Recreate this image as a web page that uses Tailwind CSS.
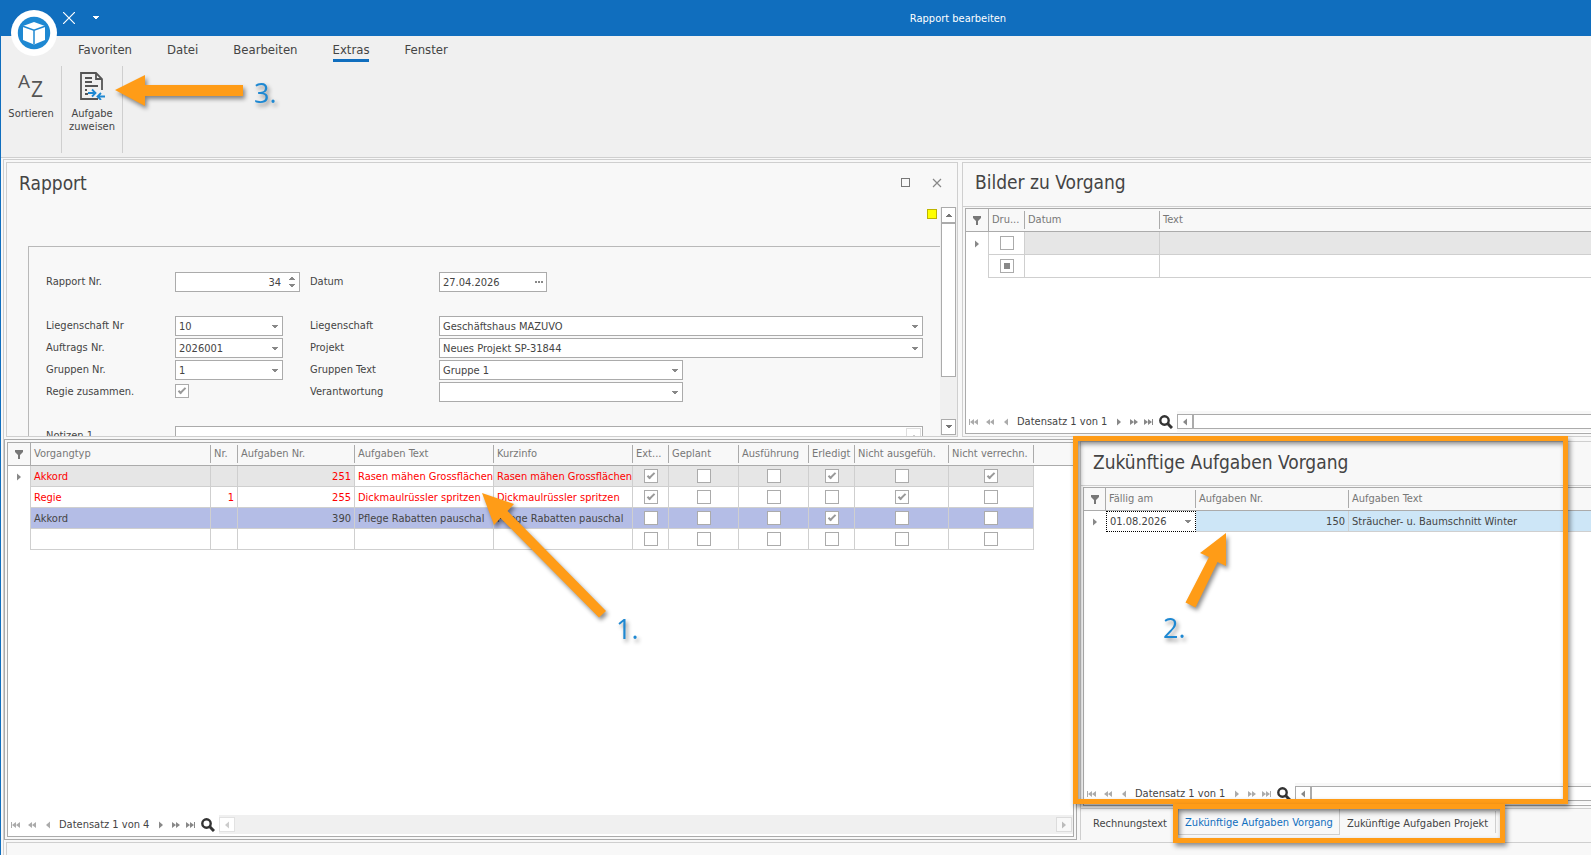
<!DOCTYPE html>
<html lang="de">
<head>
  <meta charset="UTF-8">
  <meta name="viewport" content="width=device-width, initial-scale=1.0">
  <title>Rapport bearbeiten</title>
  <script src="https://cdn.jsdelivr.net/npm/@tailwindcss/browser@4"></script>
</head>
<body class="relative h-screen flex flex-col overflow-hidden border-l border-[#106ebe] bg-[#f8f8f8] text-[#444] text-[11px] leading-[13px] font-['DejaVu_Sans_Condensed','DejaVu_Sans',sans-serif]">

  <!-- Icon sprite -->
  <svg class="hidden">
    <symbol id="i-down" viewBox="0 0 6 4"><path d="M0 0h6v1H5v1H4v1H2V2H1V1H0z" fill="currentColor"/></symbol>
    <symbol id="i-up" viewBox="0 0 6 4"><path d="M0 4h6V3H5V2H4V1H2v1H1v1H0z" fill="currentColor"/></symbol>
    <symbol id="i-next" viewBox="0 0 4 8"><path d="M0 0.5L4 4L0 7.500z" fill="currentColor"/></symbol>
    <symbol id="i-prev" viewBox="0 0 4 8"><path d="M4 0.5L0 4L4 7.500z" fill="currentColor"/></symbol>
    <symbol id="i-next2" viewBox="0 0 8 8"><path d="M0 1l4 3-4 3zM4 1l4 3-4 3z" fill="currentColor"/></symbol>
    <symbol id="i-prev2" viewBox="0 0 8 8"><path d="M4 1L0 4l4 3zM8 1L4 4l4 3z" fill="currentColor"/></symbol>
    <symbol id="i-last" viewBox="0 0 9 8"><path d="M0 1l4 3-4 3zM4 1l4 3-4 3zM8 1h1v6H8z" fill="currentColor"/></symbol>
    <symbol id="i-first" viewBox="0 0 9 8"><path d="M5 1L1 4l4 3zM9 1L5 4l4 3zM0 1h1v6H0z" fill="currentColor"/></symbol>
    <symbol id="i-filter" viewBox="0 0 10 9"><path d="M1 0h8v2L6 5v4H4V5L1 2z" fill="currentColor"/></symbol>
    <symbol id="i-search" viewBox="0 0 14 14"><circle cx="5.500" cy="5.500" r="4.200" fill="none" stroke="currentColor" stroke-width="2.400"/><path d="M8.800 8.800L13 13" stroke="currentColor" stroke-width="3"/></symbol>
  </svg>

  <!-- Title bar -->
  <header class="relative h-9 shrink-0 flex items-center bg-[#106ebe] text-white">
    <div class="w-[324px] flex items-center pl-[62px]">
      <button aria-label="Schliessen"><svg class="size-3" viewBox="0 0 12 12"><path d="M0 0l12 12M12 0L0 12" stroke="#fff" stroke-width="1.200"/></svg></button>
      <button aria-label="Schnellzugriff" class="ml-[18px]"><svg class="w-[6px] h-1"><use href="#i-down"/></svg></button>
    </div>
    <h1 class="flex-1 text-center">Rapport bearbeiten</h1>
    <button aria-label="Menü" class="absolute left-[10px] top-[10px] size-[46px] z-10">
      <svg viewBox="0 0 46 46">
        <circle cx="23" cy="23" r="23" fill="#fff"/>
        <circle cx="23" cy="23" r="16.200" fill="#1e88d2"/>
        <path d="M23 12l11 4v14l-11 4.500L12 30V16z" fill="#fff"/>
        <path d="M12 16.300l11 4 11-4M23 20.300v14" fill="none" stroke="#1e88d2" stroke-width="1.500"/>
      </svg>
    </button>
  </header>

  <!-- Ribbon -->
  <nav class="h-[30px] shrink-0 flex items-start gap-[35px] pl-[77px] pt-[6px] bg-[#f0f0f0] text-[13px] leading-4">
    <a href="#" class="pb-px border-b-[3px] border-transparent">Favoriten</a>
    <a href="#" class="pb-px border-b-[3px] border-transparent">Datei</a>
    <a href="#" class="pb-px border-b-[3px] border-transparent">Bearbeiten</a>
    <a href="#" class="pb-px border-b-[3px] border-[#106ebe]">Extras</a>
    <a href="#" class="pb-px border-b-[3px] border-transparent">Fenster</a>
  </nav>
  <div class="h-[92px] shrink-0 flex bg-[#f0f0f0] border-b border-[#cfcfcf] pb-1">
    <button class="w-[61px] border-r border-[#cfcfcf] flex flex-col items-center pt-[6px] gap-[7px]">
      <svg class="w-8 h-7 overflow-visible" viewBox="0 0 32 28" font-family="Open Sans" fill="#555">
        <text x="3" y="16" class="text-[19px]">A</text><text x="16" y="25" class="text-[21px]">Z</text>
      </svg>
      Sortieren
    </button>
    <button class="w-[61px] border-r border-[#cfcfcf] flex flex-col items-center pt-[6px] gap-[7px]">
      <svg class="w-[26px] h-7" viewBox="0 0 26 28" fill="none" stroke="#555" stroke-width="1.800">
        <path d="M19 27H2V1h15l6 6v11M17 1v6h6"/>
        <path d="M6 6h7M6 10h7M6 14h13M6 18h2M6 22h3"/>
        <path d="M9 21h8M13 17.500l3.500 3.500L13 24.500M27 24.500h-8M22 21l-3.500 3.500L22 28" stroke="#1e88d2"/>
      </svg>
      <span class="text-center">Aufgabe<br>zuweisen</span>
    </button>
  </div>

  <!-- Workspace -->
  <main class="flex-1 min-h-0 mt-px ml-[2px] border-t border-l border-[#cfcfcf] pt-[2px] flex flex-col gap-[2px]">

    <div class="flex-[275_1_0] min-h-0 pl-[2px] grid grid-cols-[minmax(0,952fr)_minmax(0,629fr)] grid-rows-[minmax(0,1fr)] gap-1">
      <!-- Rapport form -->
      <section class="flex flex-col border border-[#cfcfcf] overflow-hidden">
        <div class="h-11 shrink-0 flex items-center pl-3 pr-[15px] pb-[5px]">
          <h2 class="text-[19px] leading-6 flex-1">Rapport</h2>
          <button aria-label="Maximieren" class="size-[9px] border border-[#777] mr-[22px]"></button>
          <button aria-label="Schliessen"><svg class="size-[10px]" viewBox="0 0 10 10"><path d="M1 1l8 8M9 1L1 9" stroke="#888" stroke-width="1.200"/></svg></button>
        </div>
        <div class="flex-1 min-h-0 flex">
          <div class="flex-1 min-w-0 overflow-hidden">
            <div class="flex justify-end pt-[2px] pr-[3px]"><span class="size-[10px] bg-[#ff0] border border-[#bdb400]"></span></div>
            <form class="ml-[21px] mt-[27px] pl-[17px] pr-[17px] pt-[25px] border-t border-l border-[#b9b9b9] grid grid-cols-[129px_135px_129px_minmax(0,1fr)] auto-rows-[20px] gap-y-[2px]">
              <label for="rnr" class="pt-[3px]">Rapport Nr.</label>
              <div class="relative w-[125px]">
                <input id="rnr" value="34" class="w-full h-5 bg-white border border-[#ababab] text-right pr-[18px]">
                <svg class="absolute right-[5px] top-1 w-[6px] h-1 text-[#888]"><use href="#i-up"/></svg>
                <svg class="absolute right-[5px] top-3 w-[6px] h-1 text-[#888]"><use href="#i-down"/></svg>
              </div>
              <label for="dat" class="pt-[3px]">Datum</label>
              <div class="relative w-[108px]">
                <input id="dat" value="27.04.2026" class="w-full h-5 bg-white border border-[#ababab] pl-[3px]">
                <button type="button" aria-label="Datum wählen" class="absolute right-1 top-[9px] flex gap-px"><i class="size-[2px] bg-[#888]"></i><i class="size-[2px] bg-[#888]"></i><i class="size-[2px] bg-[#888]"></i></button>
              </div>

              <div class="col-span-4"></div>

              <label for="lnr" class="pt-[3px]">Liegenschaft Nr</label>
              <div class="relative w-[108px]">
                <select id="lnr" class="appearance-none w-full h-5 bg-white border border-[#ababab] pl-[3px]"><option>10</option></select>
                <svg class="absolute right-[5px] top-[9px] w-[6px] h-1 text-[#888] pointer-events-none"><use href="#i-down"/></svg>
              </div>
              <label for="lie" class="pt-[3px]">Liegenschaft</label>
              <div class="relative">
                <select id="lie" class="appearance-none w-full h-5 bg-white border border-[#ababab] pl-[3px]"><option>Geschäftshaus MAZUVO</option></select>
                <svg class="absolute right-[5px] top-[9px] w-[6px] h-1 text-[#888] pointer-events-none"><use href="#i-down"/></svg>
              </div>

              <label for="anr" class="pt-[3px]">Auftrags Nr.</label>
              <div class="relative w-[108px]">
                <select id="anr" class="appearance-none w-full h-5 bg-white border border-[#ababab] pl-[3px]"><option>2026001</option></select>
                <svg class="absolute right-[5px] top-[9px] w-[6px] h-1 text-[#888] pointer-events-none"><use href="#i-down"/></svg>
              </div>
              <label for="pro" class="pt-[3px]">Projekt</label>
              <div class="relative">
                <select id="pro" class="appearance-none w-full h-5 bg-white border border-[#ababab] pl-[3px]"><option>Neues Projekt SP-31844</option></select>
                <svg class="absolute right-[5px] top-[9px] w-[6px] h-1 text-[#888] pointer-events-none"><use href="#i-down"/></svg>
              </div>

              <label for="gnr" class="pt-[3px]">Gruppen Nr.</label>
              <div class="relative w-[108px]">
                <select id="gnr" class="appearance-none w-full h-5 bg-white border border-[#ababab] pl-[3px]"><option>1</option></select>
                <svg class="absolute right-[5px] top-[9px] w-[6px] h-1 text-[#888] pointer-events-none"><use href="#i-down"/></svg>
              </div>
              <label for="gtx" class="pt-[3px]">Gruppen Text</label>
              <div class="relative w-[244px]">
                <select id="gtx" class="appearance-none w-full h-5 bg-white border border-[#ababab] pl-[3px]"><option>Gruppe 1</option></select>
                <svg class="absolute right-[5px] top-[9px] w-[6px] h-1 text-[#888] pointer-events-none"><use href="#i-down"/></svg>
              </div>

              <label for="reg" class="pt-[3px]">Regie zusammen.</label>
              <div class="pt-[2px]"><input id="reg" type="checkbox" checked class="appearance-none block size-[14px] bg-white border border-[#ababab] checked:before:content-[''] checked:before:block checked:before:w-1 checked:before:h-2 checked:before:mx-auto checked:before:mt-px checked:before:border-r-2 checked:before:border-b-2 checked:before:border-[#999] checked:before:rotate-45"></div>
              <label for="ver" class="pt-[3px]">Verantwortung</label>
              <div class="relative w-[244px]">
                <select id="ver" class="appearance-none w-full h-5 bg-white border border-[#ababab] pl-[3px]"><option></option></select>
                <svg class="absolute right-[5px] top-[9px] w-[6px] h-1 text-[#888] pointer-events-none"><use href="#i-down"/></svg>
              </div>

              <div class="col-span-4"></div>

              <label for="not" class="pt-[3px]">Notizen 1</label>
              <div class="relative col-span-3">
                <textarea id="not" class="block w-full h-16 resize-none bg-white border border-[#ababab]"></textarea>
                <span class="absolute right-[2px] top-[2px] w-[15px] h-4 border border-[#ddd] flex items-center justify-center"><svg class="w-[6px] h-1 text-[#ccc]"><use href="#i-up"/></svg></span>
              </div>
            </form>
          </div>
          <!-- Vertical scrollbar -->
          <div class="w-[17px] shrink-0 bg-[#f0f0f0] px-px flex flex-col">
            <button aria-label="Nach oben" class="h-4 border border-[#ababab] bg-white flex items-center justify-center"><svg class="w-[6px] h-1 text-[#777]"><use href="#i-up"/></svg></button>
            <div class="h-[154px] border border-[#ababab] bg-white"></div>
            <button aria-label="Nach unten" class="mt-auto mb-px h-4 border border-[#ababab] bg-white flex items-center justify-center"><svg class="w-[6px] h-1 text-[#777]"><use href="#i-down"/></svg></button>
          </div>
        </div>
      </section>

      <!-- Bilder zu Vorgang -->
      <section class="flex flex-col border border-r-0 border-[#cfcfcf]">
        <div class="h-11 shrink-0 flex items-center pl-3 pb-[5px] border-b border-[#cfcfcf]">
          <h2 class="text-[19px] leading-6">Bilder zu Vorgang</h2>
        </div>
        <div class="flex-1 min-h-0 mt-px ml-[2px] mb-[2px] border border-r-0 border-[#ababab] bg-white flex flex-col">
          <table class="w-full table-fixed border-separate border-spacing-0">
            <colgroup><col class="w-[23px]"><col class="w-9"><col class="w-[135px]"><col></colgroup>
            <thead>
              <tr class="h-[23px] text-[#777] text-left">
                <th class="p-0 bg-[#f8f8f8] border-b border-r border-[#ababab]"><svg class="w-[10px] h-[9px] mx-auto"><use href="#i-filter"/></svg></th>
                <th class="p-0 bg-[#f8f8f8] border-b border-[#ababab] font-normal"><div class="h-[18px] leading-[18px] border-r border-[#ababab] pl-[3px] truncate">Dru...</div></th>
                <th class="p-0 bg-[#f8f8f8] border-b border-[#ababab] font-normal"><div class="h-[18px] leading-[18px] border-r border-[#ababab] pl-[3px]">Datum</div></th>
                <th class="p-0 bg-[#f8f8f8] border-b border-[#ababab] font-normal"><div class="h-[18px] leading-[18px] pl-[3px]">Text</div></th>
              </tr>
            </thead>
            <tbody>
              <tr class="h-[23px]">
                <td class="p-0 border-r border-[#cfcfcf]"><svg class="w-1 h-2 mx-auto text-[#888]"><use href="#i-next"/></svg></td>
                <td class="p-0 border-r border-b border-[#cfcfcf]"><input type="checkbox" aria-label="Drucken" class="appearance-none block mx-auto size-[14px] bg-white border border-[#ababab]"></td>
                <td class="p-0 border-r border-b border-[#cfcfcf] bg-[#e6e6e6]"></td>
                <td class="p-0 border-b border-[#cfcfcf] bg-[#e6e6e6]"></td>
              </tr>
              <tr class="h-[23px]">
                <td class="p-0 border-r border-[#cfcfcf]"></td>
                <td class="p-0 border-r border-b border-[#cfcfcf]"><input type="checkbox" aria-label="Drucken" class="appearance-none block mx-auto size-[14px] bg-white border border-[#ababab] before:content-[''] before:block before:size-[6px] before:m-[3px] before:bg-[#888]"></td>
                <td class="p-0 border-r border-b border-[#cfcfcf]"></td>
                <td class="p-0 border-b border-[#cfcfcf]"></td>
              </tr>
            </tbody>
          </table>
          <div class="mt-auto h-[22px] pb-px flex items-center pl-[3px] text-[#888]">
            <button aria-label="Erster"><svg class="w-[9px] h-2 opacity-70"><use href="#i-first"/></svg></button>
            <button aria-label="Seite zurück" class="ml-2"><svg class="w-2 h-2 opacity-70"><use href="#i-prev2"/></svg></button>
            <button aria-label="Zurück" class="ml-[10px]"><svg class="w-1 h-2 opacity-70"><use href="#i-prev"/></svg></button>
            <span class="ml-[9px] w-[91px] text-[#444] whitespace-nowrap">Datensatz 1 von 1</span>
            <button aria-label="Weiter" class="ml-[9px]"><svg class="w-1 h-2"><use href="#i-next"/></svg></button>
            <button aria-label="Seite vor" class="ml-[9px]"><svg class="w-2 h-2"><use href="#i-next2"/></svg></button>
            <button aria-label="Letzter" class="ml-[6px]"><svg class="w-[9px] h-2"><use href="#i-last"/></svg></button>
            <button aria-label="Suchen" class="ml-[6px] text-[#333]"><svg class="size-[14px]"><use href="#i-search"/></svg></button>
            <div class="ml-1 flex-1 h-[21px] flex items-center bg-[#f8f8f8]">
              <button aria-label="Nach links" class="w-4 h-[15px] border border-[#ababab] bg-white flex items-center justify-center"><svg class="w-1 h-2"><use href="#i-prev"/></svg></button>
              <div class="flex-1 h-[15px] border border-r-0 border-[#ababab] bg-white"></div>
            </div>
          </div>
        </div>
      </section>
    </div>

    <div class="flex-[401_1_0] min-h-0 grid grid-cols-[minmax(0,1073fr)_minmax(0,511fr)] grid-rows-[minmax(0,1fr)] gap-[3px]">
      <!-- Vorgänge -->
      <section class="border border-[#ababab] p-[2px] flex">
        <div class="flex-1 min-w-0 border border-[#ababab] bg-white flex flex-col">
          <table class="w-full table-fixed border-separate border-spacing-0">
            <colgroup><col class="w-[23px]"><col class="w-[180px]"><col class="w-[27px]"><col class="w-[117px]"><col class="w-[139px]"><col class="w-[139px]"><col class="w-9"><col class="w-[70px]"><col class="w-[70px]"><col class="w-[46px]"><col class="w-[94px]"><col class="w-[85px]"><col></colgroup>
            <thead><tr id="orderHead" class="h-[23px] text-[#777] text-left"></tr></thead>
            <tbody id="orderRows"></tbody>
          </table>
          <div class="mt-auto h-[22px] pb-px flex items-center pl-[3px] text-[#888]">
            <button aria-label="Erster"><svg class="w-[9px] h-2 opacity-70"><use href="#i-first"/></svg></button>
            <button aria-label="Seite zurück" class="ml-2"><svg class="w-2 h-2 opacity-70"><use href="#i-prev2"/></svg></button>
            <button aria-label="Zurück" class="ml-[10px]"><svg class="w-1 h-2 opacity-70"><use href="#i-prev"/></svg></button>
            <span class="ml-[9px] w-[91px] text-[#444] whitespace-nowrap">Datensatz 1 von 4</span>
            <button aria-label="Weiter" class="ml-[9px]"><svg class="w-1 h-2"><use href="#i-next"/></svg></button>
            <button aria-label="Seite vor" class="ml-[9px]"><svg class="w-2 h-2"><use href="#i-next2"/></svg></button>
            <button aria-label="Letzter" class="ml-[6px]"><svg class="w-[9px] h-2"><use href="#i-last"/></svg></button>
            <button aria-label="Suchen" class="ml-[6px] text-[#333]"><svg class="size-[14px]"><use href="#i-search"/></svg></button>
            <div class="ml-1 flex-1 h-[19px] flex items-center justify-between bg-[#f0f0f0] pr-px">
              <button disabled aria-label="Nach links" class="w-4 h-[15px] border border-[#e2e2e2] bg-white flex items-center justify-center text-[#ccc]"><svg class="w-1 h-2"><use href="#i-prev"/></svg></button>
              <button disabled aria-label="Nach rechts" class="w-4 h-[15px] border border-[#dcdcdc] bg-[#f8f8f8] flex items-center justify-center text-[#bbb]"><svg class="w-1 h-2"><use href="#i-next"/></svg></button>
            </div>
          </div>
        </div>
      </section>

      <!-- Zukünftige Aufgaben -->
      <div class="pt-[2px] flex flex-col">
        <section class="flex-1 min-h-0 flex flex-col border border-r-0 border-[#cfcfcf]">
          <div class="h-11 shrink-0 flex items-center pl-3 pb-[3px] border-b border-[#cfcfcf]">
            <h2 class="text-[19px] leading-6">Zukünftige Aufgaben Vorgang</h2>
          </div>
          <div class="flex-1 min-h-0 mt-px ml-[2px] mb-[2px] border border-r-0 border-[#ababab] bg-white flex flex-col">
            <table class="w-full table-fixed border-separate border-spacing-0">
              <colgroup><col class="w-[22px]"><col class="w-[90px]"><col class="w-[153px]"><col></colgroup>
              <thead>
                <tr class="h-[23px] text-[#777] text-left">
                  <th class="p-0 bg-[#f8f8f8] border-b border-r border-[#ababab]"><svg class="w-[10px] h-[9px] mx-auto"><use href="#i-filter"/></svg></th>
                  <th class="p-0 bg-[#f8f8f8] border-b border-[#ababab] font-normal"><div class="h-[18px] leading-[18px] border-r border-[#ababab] pl-[3px]">Fällig am</div></th>
                  <th class="p-0 bg-[#f8f8f8] border-b border-[#ababab] font-normal"><div class="h-[18px] leading-[18px] border-r border-[#ababab] pl-[3px]">Aufgaben Nr.</div></th>
                  <th class="p-0 bg-[#f8f8f8] border-b border-[#ababab] font-normal"><div class="h-[18px] leading-[18px] pl-[3px]">Aufgaben Text</div></th>
                </tr>
              </thead>
              <tbody>
                <tr class="h-[21px]">
                  <td class="p-0"><svg class="w-1 h-2 mx-auto text-[#888]"><use href="#i-next"/></svg></td>
                  <td class="p-0 relative">
                    <select aria-label="Fällig am" class="block appearance-none w-full h-[21px] bg-white border border-dotted border-black pl-[3px]"><option>01.08.2026</option></select>
                    <svg class="absolute right-[5px] top-[9px] w-[6px] h-1 text-[#888] pointer-events-none"><use href="#i-down"/></svg>
                  </td>
                  <td class="p-0 pr-[3px] text-right border-r border-b border-[#cfcfcf] bg-[#cde6f7]">150</td>
                  <td class="p-0 pl-[3px] border-b border-[#cfcfcf] bg-[#cde6f7]">Sträucher- u. Baumschnitt Winter</td>
                </tr>
              </tbody>
            </table>
            <div class="mt-auto h-[22px] pb-px flex items-center pl-[3px] text-[#888]">
              <button aria-label="Erster"><svg class="w-[9px] h-2 opacity-70"><use href="#i-first"/></svg></button>
              <button aria-label="Seite zurück" class="ml-2"><svg class="w-2 h-2 opacity-70"><use href="#i-prev2"/></svg></button>
              <button aria-label="Zurück" class="ml-[10px]"><svg class="w-1 h-2 opacity-70"><use href="#i-prev"/></svg></button>
              <span class="ml-[9px] w-[91px] text-[#444] whitespace-nowrap">Datensatz 1 von 1</span>
              <button aria-label="Weiter" class="ml-[9px]"><svg class="w-1 h-2 opacity-70"><use href="#i-next"/></svg></button>
              <button aria-label="Seite vor" class="ml-[9px]"><svg class="w-2 h-2 opacity-70"><use href="#i-next2"/></svg></button>
              <button aria-label="Letzter" class="ml-[6px]"><svg class="w-[9px] h-2 opacity-70"><use href="#i-last"/></svg></button>
              <button aria-label="Suchen" class="ml-[6px] text-[#333]"><svg class="size-[14px]"><use href="#i-search"/></svg></button>
              <div class="ml-1 flex-1 h-[21px] flex items-center bg-[#f8f8f8]">
                <button aria-label="Nach links" class="w-4 h-[15px] border border-[#ababab] bg-white flex items-center justify-center"><svg class="w-1 h-2"><use href="#i-prev"/></svg></button>
                <div class="flex-1 h-[15px] border border-r-0 border-[#ababab] bg-white"></div>
              </div>
            </div>
          </div>
        </section>
        <!-- Panel tabs -->
        <div class="h-[31px] shrink-0 flex items-start border-l border-[#cfcfcf]">
          <button class="h-[26px] w-[97px] pl-3 pt-[2px] text-left whitespace-nowrap">Rechnungstext</button>
          <button class="h-[26px] w-[162px] pt-[2px] border border-t-0 border-[#cfcfcf] text-[#106ebe] whitespace-nowrap">Zukünftige Aufgaben Vorgang</button>
          <button class="h-[22px] mt-[2px] w-[156px] pt-[2px] border-r border-[#cfcfcf] whitespace-nowrap">Zukünftige Aufgaben Projekt</button>
        </div>
      </div>
    </div>

    <div class="h-[13px] shrink-0 ml-[2px] border-t border-l border-[#cfcfcf]"></div>
  </main>

  <!-- Callouts -->
  <div class="absolute left-[1072px] top-[436px] w-[495px] h-[368px] border-[5px] border-[#ff9c17] shadow-[2px_3px_5px_rgba(0,0,0,0.45),inset_2px_3px_5px_rgba(0,0,0,0.45)] pointer-events-none"></div>
  <div class="absolute left-[1172px] top-[804px] w-[332px] h-[39px] border-[5px] border-[#ff9c17] shadow-[2px_3px_5px_rgba(0,0,0,0.45),inset_2px_3px_5px_rgba(0,0,0,0.45)] pointer-events-none"></div>
  <svg class="absolute -left-px top-0 w-[1591px] h-[855px] pointer-events-none drop-shadow-[2px_3px_2px_rgba(0,0,0,0.45)]" viewBox="0 0 1591 855">
    <g fill="#ff9c17">
      <path d="M115 90L145 75V85H243V96H145V106z"/>
      <path d="M482 493L514 504L507.500 511L606 611L599 617.500L500.500 518L494 525z"/>
      <path d="M1226 533V566L1217.500 562L1195.500 607.500L1185.500 602.500L1209 557L1200 553z"/>
    </g>
    <g fill="#1e88d2" font-family="Open Sans" font-size="27">
      <text x="254" y="103">3.</text>
      <text x="616" y="639">1.</text>
      <text x="1163" y="638">2.</text>
    </g>
  </svg>

<script>
const heads = ['Vorgangtyp', 'Nr.', 'Aufgaben Nr.', 'Aufgaben Text', 'Kurzinfo', 'Ext...', 'Geplant', 'Ausführung', 'Erledigt', 'Nicht ausgefüh.', 'Nicht verrechn.'];
const rows = [
  { tone: 'text-[#f00]', bg: 'bg-[#e6e6e6]', text: ['Akkord', '', '251', 'Rasen mähen Grossflächen', 'Rasen mähen Grossflächen'], checks: [1, 0, 0, 1, 0, 1], active: true },
  { tone: 'text-[#f00]', bg: 'bg-white', text: ['Regie', '1', '255', 'Dickmaulrüssler spritzen', 'Dickmaulrüssler spritzen'], checks: [1, 0, 0, 0, 1, 0] },
  { tone: 'text-[#444]', bg: 'bg-[#b4bde6]', text: ['Akkord', '', '390', 'Pflege Rabatten pauschal', 'Pflege Rabatten pauschal'], checks: [0, 0, 0, 1, 0, 0] },
  { tone: 'text-[#444]', bg: 'bg-white', text: ['', '', '', '', ''], checks: [0, 0, 0, 0, 0, 0] }
];

document.getElementById('orderHead').innerHTML =
  '<th class="p-0 bg-[#f8f8f8] border-b border-r border-[#ababab]"><svg class="w-[10px] h-[9px] mx-auto"><use href="#i-filter"/></svg></th>' +
  heads.map(h => `<th class="p-0 bg-[#f8f8f8] border-b border-[#ababab] font-normal"><div class="h-[18px] leading-[18px] border-r border-[#ababab] pl-[3px] whitespace-nowrap">${h}</div></th>`).join('') +
  '<th class="p-0 bg-[#f8f8f8] border-b border-[#ababab]"></th>';

document.getElementById('orderRows').innerHTML = rows.map(r => {
  const marker = r.active ? '<svg class="w-1 h-2 mx-auto text-[#888]"><use href="#i-next"/></svg>' : '';
  const texts = r.text.map((t, i) => {
    const align = i === 1 || i === 2 ? 'text-right pr-[3px]' : 'pl-[3px]';
    const bg = r.active && i === 3 ? 'bg-white' : r.bg;
    return `<td class="p-0 ${align} ${bg} border-r border-b border-[#cfcfcf] whitespace-nowrap">${t}</td>`;
  }).join('');
  const checks = r.checks.map((c, i) =>
    `<td class="p-0 ${r.bg} border-r border-b border-[#cfcfcf]"><input type="checkbox" aria-label="${heads[i + 5]}" ${c ? 'checked' : ''} class="appearance-none block mx-auto size-[14px] bg-white border border-[#ababab] checked:before:content-[''] checked:before:block checked:before:w-1 checked:before:h-2 checked:before:mx-auto checked:before:mt-px checked:before:border-r-2 checked:before:border-b-2 checked:before:border-[#999] checked:before:rotate-45"></td>`).join('');
  return `<tr class="h-[21px] ${r.tone}"><td class="p-0 border-r border-[#cfcfcf]">${marker}</td>${texts}${checks}<td class="p-0"></td></tr>`;
}).join('');
</script>
</body>
</html>
